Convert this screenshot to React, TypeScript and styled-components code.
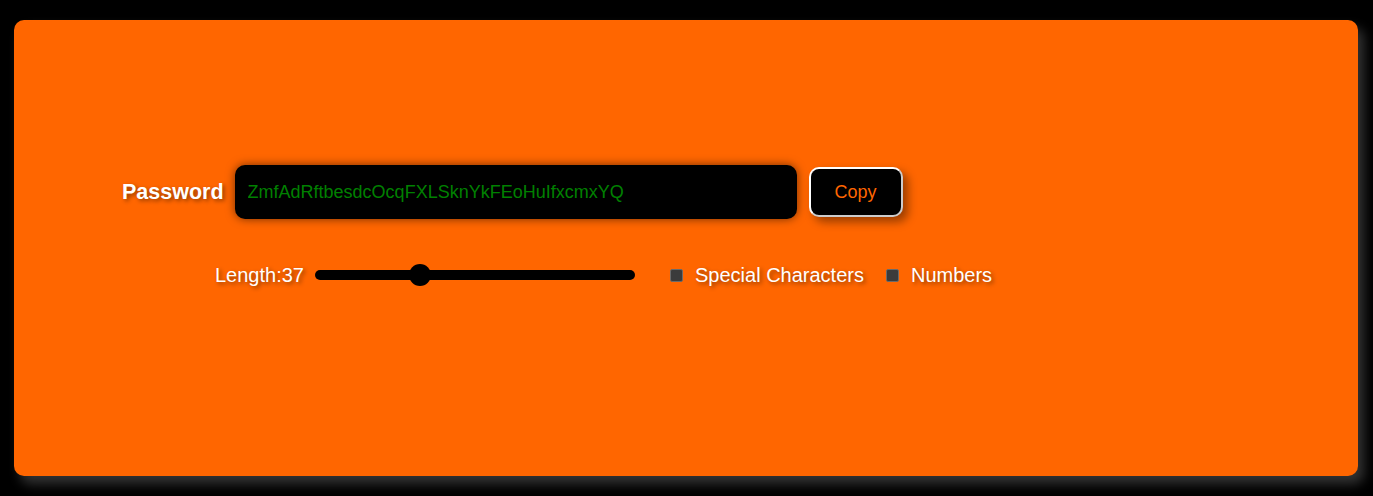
import React, { useState } from "react";
import styled, { createGlobalStyle } from "styled-components";

const Global = createGlobalStyle`
  html, body { margin: 0; padding: 0; background: #000; }
  body { font-family: "Liberation Sans", Arial, sans-serif; }
  * { box-sizing: border-box; }
`;

const Card = styled.div`
  margin: 20px 15px 20px 14px;
  height: 456px;
  background: #ff6600;
  border-radius: 10px;
  box-shadow: 6px 8px 12px #333;
  display: flex;
  flex-direction: column;
  padding-top: 145px;
`;

const PasswordRow = styled.div`
  display: flex;
  align-items: center;
  padding-left: 108px;
  height: 54px;
`;

const Label = styled.label`
  color: #fff;
  font-size: 21.5px;
  font-weight: bold;
  text-shadow: 2px 2px 4px rgba(0, 0, 0, 0.45);
  margin-right: 11px;
`;

const PasswordInput = styled.input`
  width: 562px;
  height: 54px;
  background: #000;
  border: none;
  border-radius: 10px;
  color: #008000;
  font-family: "Liberation Sans", Arial, sans-serif;
  font-size: 18px;
  padding: 0 13px;
  outline: none;
  box-shadow: 0 0 10px rgba(0, 0, 0, 0.55);
`;

const CopyButton = styled.button`
  margin-left: 12px;
  width: 94px;
  height: 50px;
  background: #000;
  color: #ff6600;
  border: 2px solid #fff;
  border-right-color: #ccc;
  border-bottom-color: #ccc;
  border-radius: 10px;
  font-family: "Liberation Sans", Arial, sans-serif;
  font-size: 18px;
  box-shadow: 5px 5px 10px rgba(0, 0, 0, 0.4);
  cursor: pointer;
`;

const OptionsRow = styled.div`
  display: flex;
  align-items: center;
  padding-left: 201px;
  margin-top: 42px;
  height: 28px;
`;

const OptionText = styled.span`
  color: #fff;
  font-size: 20px;
  text-shadow: 2px 2px 4px rgba(0, 0, 0, 0.45);
`;

const Slider = styled.input`
  -webkit-appearance: none;
  appearance: none;
  width: 320px;
  height: 10px;
  margin: 0 35px 0 11px;
  background: #000;
  border-radius: 5px;
  outline: none;
  &::-webkit-slider-thumb {
    -webkit-appearance: none;
    appearance: none;
    width: 22px;
    height: 22px;
    border-radius: 50%;
    background: #000;
    cursor: pointer;
  }
`;

const Check = styled.input`
  -webkit-appearance: none;
  appearance: none;
  width: 13px;
  height: 13px;
  margin: 0 12px 0 0;
  background: #3b3b3b;
  border: 1px solid #6a6a6a;
  border-radius: 2px;
`;

const Gap = styled.span`
  display: inline-block;
  width: 22px;
`;

export default function App() {
  const [length, setLength] = useState(37);
  return (
    <>
      <Global />
      <Card>
        <PasswordRow>
          <Label>Password</Label>
          <PasswordInput readOnly value="ZmfAdRftbesdcOcqFXLSknYkFEoHuIfxcmxYQ" />
          <CopyButton>Copy</CopyButton>
        </PasswordRow>
        <OptionsRow>
          <OptionText>Length:{length}</OptionText>
          <Slider
            type="range"
            min={8}
            max={100}
            value={length}
            onChange={(e) => setLength(Number(e.target.value))}
          />
          <Check type="checkbox" />
          <OptionText>Special Characters</OptionText>
          <Gap />
          <Check type="checkbox" />
          <OptionText>Numbers</OptionText>
        </OptionsRow>
      </Card>
    </>
  );
}
